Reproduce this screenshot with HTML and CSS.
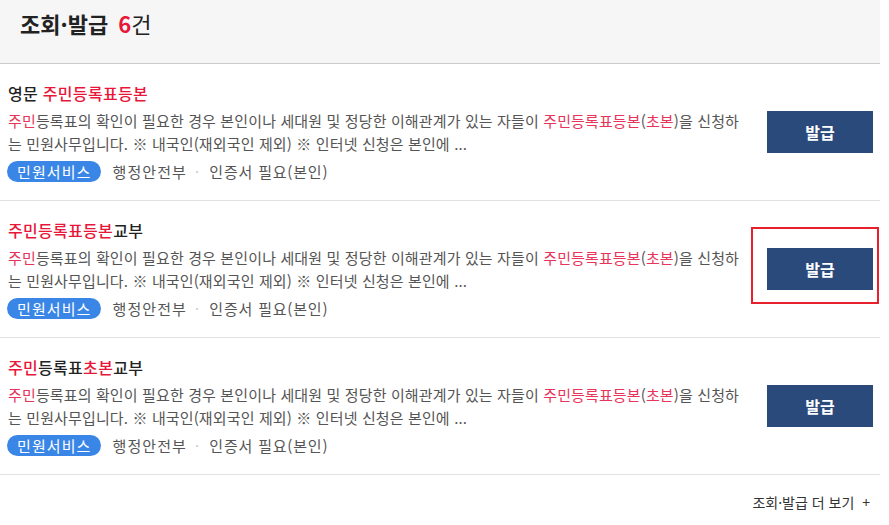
FILE: index.html
```html
<!DOCTYPE html>
<html lang="ko">
<head>
<meta charset="utf-8">
<link rel="stylesheet" href="styles.css">
</head>
<body>
<div class="wrap">
  <div class="head">
    <h2 class="head-title">조회·발급 <span class="count">6</span><span class="unit">건</span></h2>
  </div>
  <ul class="list">
    <li class="item">
      <div class="info">
        <p class="title">영문 <em>주민등록표등본</em></p>
        <p class="desc"><em>주민</em>등록표의 확인이 필요한 경우 본인이나 세대원 및 정당한 이해관계가 있는 자들이 <em>주민등록표등본</em>(<em>초본</em>)을 신청하는 민원사무입니다. ※ 내국인(재외국인 제외) ※ 인터넷 신청은 본인에 ...</p>
        <div class="meta"><span class="badge">민원서비스</span><span class="org">행정안전부</span><span class="dot">·</span><span class="cert">인증서 필요(본인)</span></div>
      </div>
      <div class="action"><button class="btn">발급</button></div>
    </li>
    <li class="item">
      <div class="info">
        <p class="title"><em>주민등록표등본</em>교부</p>
        <p class="desc"><em>주민</em>등록표의 확인이 필요한 경우 본인이나 세대원 및 정당한 이해관계가 있는 자들이 <em>주민등록표등본</em>(<em>초본</em>)을 신청하는 민원사무입니다. ※ 내국인(재외국인 제외) ※ 인터넷 신청은 본인에 ...</p>
        <div class="meta"><span class="badge">민원서비스</span><span class="org">행정안전부</span><span class="dot">·</span><span class="cert">인증서 필요(본인)</span></div>
      </div>
      <div class="action"><button class="btn">발급</button><span class="highlight"></span></div>
    </li>
    <li class="item">
      <div class="info">
        <p class="title"><em>주민</em>등록표<em>초본</em>교부</p>
        <p class="desc"><em>주민</em>등록표의 확인이 필요한 경우 본인이나 세대원 및 정당한 이해관계가 있는 자들이 <em>주민등록표등본</em>(<em>초본</em>)을 신청하는 민원사무입니다. ※ 내국인(재외국인 제외) ※ 인터넷 신청은 본인에 ...</p>
        <div class="meta"><span class="badge">민원서비스</span><span class="org">행정안전부</span><span class="dot">·</span><span class="cert">인증서 필요(본인)</span></div>
      </div>
      <div class="action"><button class="btn">발급</button></div>
    </li>
  </ul>
  <div class="more"><a class="more-link" href="#">조회·발급 더 보기 <span class="plus">+</span></a></div>
</div>
</body>
</html>
```

FILE: styles.css
```css
* { box-sizing: border-box; }
html, body { margin: 0; padding: 0; background: #fff; }
body {
  font-family: "Noto Sans CJK KR", "Noto Sans", sans-serif;
  color: #333;
}
.wrap { width: 880px; }
.head {
  height: 64px;
  background: #f6f6f6;
  border-bottom: 1px solid #cccccc;
  padding: 7px 0 0 20px;
}
.head-title {
  margin: 0;
  font-size: 22px;
  line-height: 32px;
  font-weight: 700;
  color: #222;
}
.head-title .count { color: #e8173a; margin-left: 4px; }
.head-title .unit { font-weight: 400; }
.list { list-style: none; margin: 0; padding: 0; }
.item {
  display: flex;
  align-items: center;
  border-bottom: 1px solid #e2e2e2;
  padding: 16px 7px 17px 8px;
  height: 137px;
}
.info { width: 740px; }
.title {
  margin: 0 0 4px;
  font-size: 16px;
  line-height: 24px;
  font-weight: 500;
  letter-spacing: 0.3px;
  color: #222;
}
em { font-style: normal; color: #e8173a; }
.desc {
  margin: 0;
  font-size: 15px;
  line-height: 23px;
  letter-spacing: 0.13px;
  color: #555;
}
.desc em { color: #e8335a; }
.meta {
  display: flex;
  align-items: center;
  margin-top: 6px;
  height: 21px;
  font-size: 15px;
  letter-spacing: 1.1px;
  color: #555;
}
.badge {
  display: inline-block;
  height: 21px;
  line-height: 21px;
  padding: 0 9px 0 10px;
  border-radius: 11px;
  background: #3a86e6;
  color: #fff;
  margin-right: 12px;
  margin-left: -1px;
}
.dot { color: #ccc; margin: 0 9px 0 8px; }
.cert { letter-spacing: 0.8px; }
.action {
  position: relative;
  margin-left: auto;
}
.btn {
  display: block;
  width: 106px;
  height: 42px;
  border: 0;
  background: #2b4a7c;
  color: #fff;
  font-family: inherit;
  font-size: 16px;
  font-weight: 700;
}
.highlight {
  position: absolute;
  left: -16px;
  top: -21px;
  width: 128px;
  height: 77px;
  border: 2px solid #e8202c;
}
.more {
  display: flex;
  justify-content: flex-end;
  padding: 16px 10px 0 0;
}
.more-link {
  text-decoration: none;
  font-size: 14px;
  color: #333;
  line-height: 22px;
}
.plus { margin-left: 4px; }
```
